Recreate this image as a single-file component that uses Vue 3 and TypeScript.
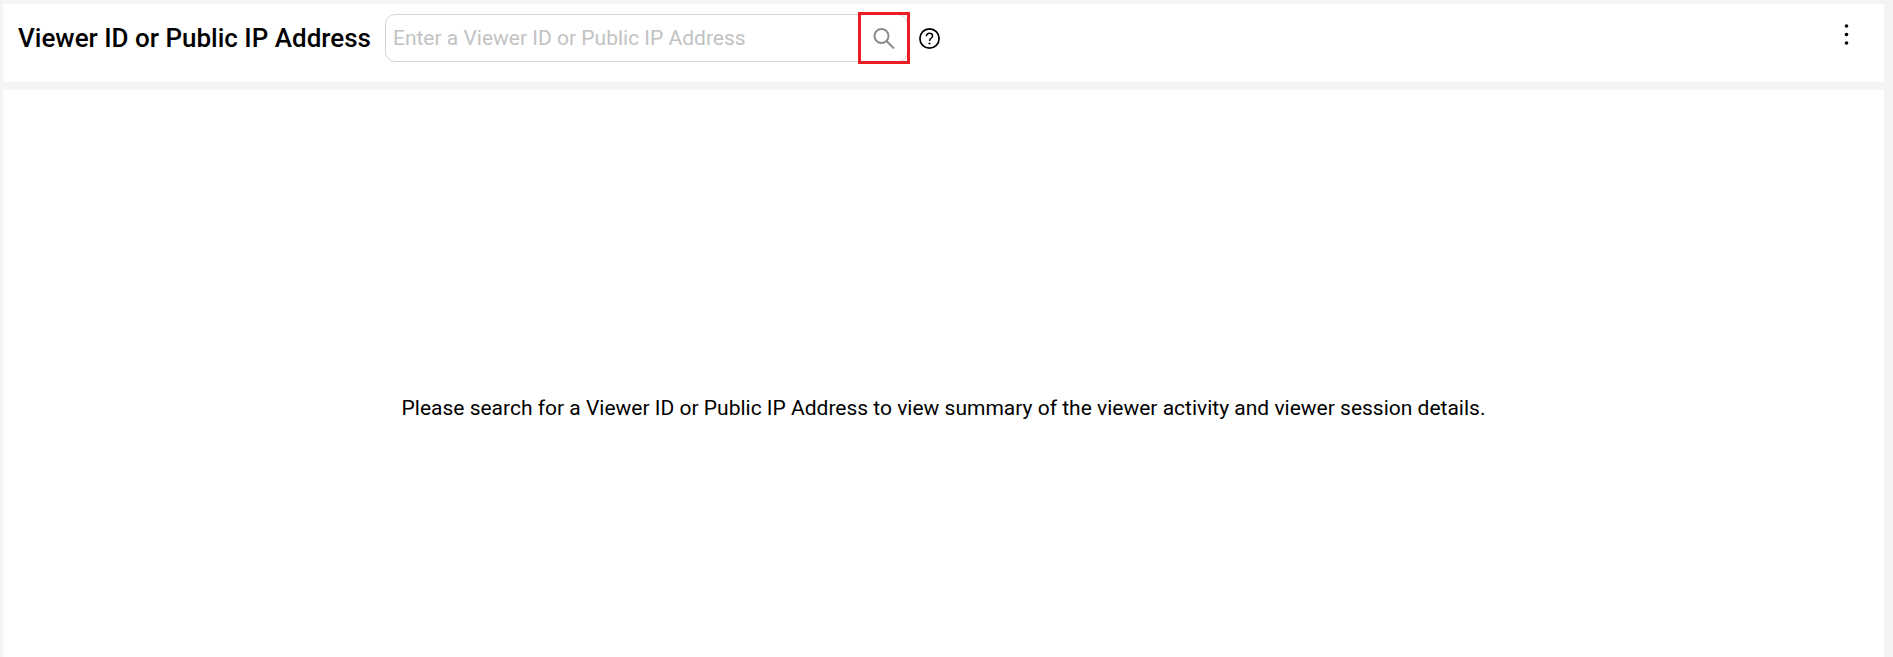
<script setup lang="ts">
import { ref } from 'vue'

const query = ref('')
</script>

<template>
  <div class="page">
    <header class="toolbar">
      <form class="search" @submit.prevent>
        <label class="label" for="viewer-query">Viewer ID or Public IP Address</label>
        <div class="field">
          <input
            id="viewer-query"
            v-model="query"
            class="input"
            type="text"
            placeholder="Enter a Viewer ID or Public IP Address"
          />
          <button class="submit" type="submit" aria-label="Search">
            <svg width="22" height="22" viewBox="0 0 22 22" fill="none" stroke="#8c8c8c" stroke-width="2">
              <circle cx="8.5" cy="9" r="7" />
              <path d="M13.5 14l7.5 7.5" />
            </svg>
          </button>
        </div>
        <button class="icon-button help" type="button" aria-label="Help">
          <svg width="21" height="22" viewBox="0 0 21 22" fill="none" stroke="#000">
            <circle cx="10.5" cy="11.5" r="9.6" stroke-width="1.7" />
            <path d="M7.4 9.3C7.4 7.4 8.7 6.3 10.5 6.3s3.1 1.1 3.1 2.7c0 2.1-3.1 2.4-3.1 4.9" stroke-width="1.5" />
            <circle cx="10.5" cy="16.5" r="1.1" fill="#000" stroke="none" />
          </svg>
        </button>
      </form>
      <button class="icon-button menu" type="button" aria-label="More options">
        <svg width="6" height="22" viewBox="0 0 6 22" fill="#000">
          <circle cx="3.5" cy="2" r="1.8" />
          <circle cx="3.5" cy="10.5" r="1.8" />
          <circle cx="3.5" cy="19" r="1.8" />
        </svg>
      </button>
    </header>
    <main class="content">
      <p class="message">
        Please search for a Viewer ID or Public IP Address to view summary of the viewer activity and viewer session details.
      </p>
    </main>
  </div>
</template>

<style>
body {
  margin: 0;
  background: #f4f4f4;
}
</style>

<style scoped>
.page {
  box-sizing: border-box;
  min-height: 100vh;
  display: flex;
  flex-direction: column;
  gap: 8px;
  padding: 4px 9px 0 3px;
  background: #f4f4f4;
  font-family: Roboto, "Liberation Sans", sans-serif;
  color: #000;
}

.toolbar {
  display: flex;
  align-items: flex-start;
  justify-content: space-between;
  padding: 10px 35px 20px 15px;
  background: #fff;
}

.search {
  display: flex;
  align-items: center;
}

.label {
  margin-right: 14px;
  font-size: 26px;
  font-weight: 500;
  line-height: 32px;
  white-space: nowrap;
}

.field {
  box-sizing: border-box;
  display: flex;
  width: 523px;
  height: 48px;
  border: 1px solid #d3d3d3;
  border-radius: 10px;
}

.input {
  flex: 1;
  min-width: 0;
  padding: 0 7px;
  border: 0;
  outline: none;
  background: none;
  font-family: inherit;
  font-size: 21px;
  color: #000;
}

.input::placeholder {
  color: #c2c2c2;
  opacity: 1;
}

.submit {
  position: relative;
  display: flex;
  align-items: center;
  justify-content: center;
  width: 46px;
  padding: 0;
  border: 0;
  background: none;
}

/* Highlight frame laid over the end of the field */
.submit::after {
  content: "";
  position: absolute;
  inset: -3px;
  border: 3px solid #ed1c24;
}

.icon-button {
  display: flex;
  padding: 0;
  border: 0;
  background: none;
}

.help {
  margin-left: 11px;
}

.menu {
  margin-top: 10px;
}

.content {
  flex: 1;
  display: flex;
  align-items: center;
  justify-content: center;
  padding: 68px 16px 0;
  background: #fff;
}

.message {
  margin: 0;
  font-size: 21px;
  line-height: 28px;
  text-align: center;
}
</style>
